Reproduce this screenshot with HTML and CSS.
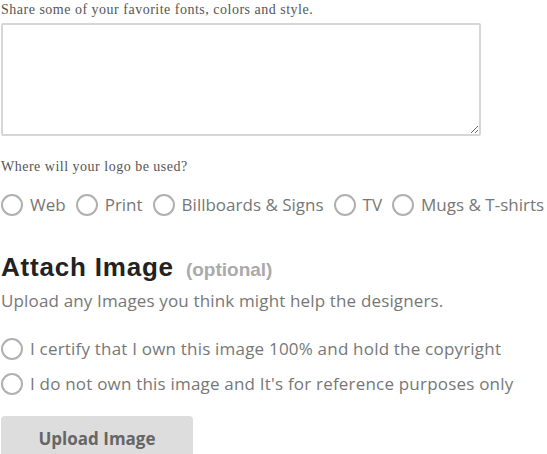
FILE: index.html
```html
<!DOCTYPE html>
<html lang="en">
<head>
    <meta charset="UTF-8">
    <meta name="viewport" content="width=device-width, initial-scale=1.0">
    <title>Logo Brief</title>
    <link rel="stylesheet" href="styles.css">
</head>
<body>
    <form class="brief">
        <label class="field-label" for="style-notes">Share some of your favorite fonts, colors and style.</label>
        <textarea id="style-notes" class="notes"></textarea>

        <p class="field-label usage-label">Where will your logo be used?</p>
        <div class="usage">
            <label class="choice"><span class="dot"></span>Web</label>
            <label class="choice"><span class="dot"></span>Print</label>
            <label class="choice"><span class="dot"></span>Billboards &amp; Signs</label>
            <label class="choice"><span class="dot"></span>TV</label>
            <label class="choice"><span class="dot"></span>Mugs &amp; T-shirts</label>
        </div>

        <h2 class="attach-title">Attach Image <span class="optional">(optional)</span></h2>
        <p class="attach-help">Upload any Images you think might help the designers.</p>

        <div class="rights">
            <label class="choice"><span class="dot"></span>I certify that I own this image 100% and hold the copyright</label>
            <label class="choice"><span class="dot"></span>I do not own this image and It's for reference purposes only</label>
        </div>

        <button type="button" class="upload">Upload Image</button>
    </form>
</body>
</html>
```

FILE: styles.css
```css
body {
    margin: 0;
    padding: 0 1px;
    font-family: "Open Sans", sans-serif;
    color: #777;
    background: #fff;
}
.brief {
    display: flex;
    flex-direction: column;
    align-items: flex-start;
}
.field-label {
    font-family: "Liberation Serif", serif;
    font-size: 14px;
    letter-spacing: 0.5px;
    color: #555;
    margin: 0;
    padding-top: 1px;
    line-height: 18px;
}
.notes {
    width: 480px;
    height: 113px;
    box-sizing: border-box;
    margin-top: 4px;
    border: 2px solid #d6d6d6;
    border-radius: 2px;
}
.usage-label {
    margin-top: 21px;
}
.usage {
    display: flex;
    gap: 10px;
    margin-top: 18px;
}
.choice {
    display: flex;
    align-items: center;
    gap: 7px;
    font-size: 17px;
    line-height: 22px;
    color: #777;
    white-space: nowrap;
}
.dot {
    width: 22px;
    height: 22px;
    box-sizing: border-box;
    border: 2px solid #b0b0b0;
    border-radius: 50%;
    flex: none;
}
.attach-title {
    font-family: "Liberation Sans", Arial, sans-serif;
    font-size: 26px;
    letter-spacing: 0.8px;
    font-weight: bold;
    color: #222;
    margin: 36px 0 0;
    line-height: 30px;
}
.optional {
    font-size: 19px;
    letter-spacing: 0;
    color: #aaa;
    margin-left: 4px;
}
.attach-help {
    margin: 5px 0 0;
    font-size: 17px;
    letter-spacing: 0.15px;
    line-height: 22px;
}
.rights {
    display: flex;
    flex-direction: column;
    gap: 13px;
    margin-top: 26px;
    letter-spacing: 0.2px;
}
.upload {
    margin-top: 21px;
    width: 192px;
    height: 44px;
    border: none;
    border-radius: 4px;
    background: #ddd;
    color: #666;
    font-family: "Open Sans", sans-serif;
    font-size: 17px;
    font-weight: bold;
}
```
